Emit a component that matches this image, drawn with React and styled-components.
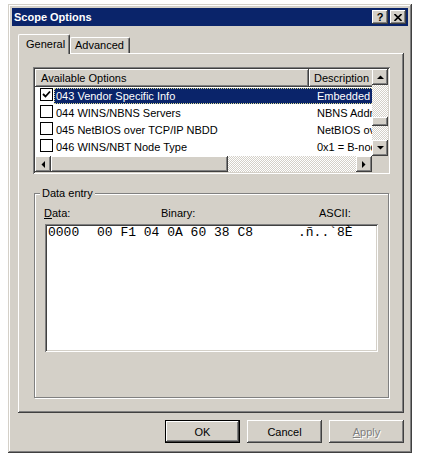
import React from 'react';
import styled, { createGlobalStyle, css } from 'styled-components';

const GlobalStyle = createGlobalStyle`
  body {
    margin: 0;
    background: #ffffff;
    font-family: 'Liberation Sans', Arial, sans-serif;
    font-size: 11px;
    color: #000000;
  }
`;

const raised = css`
  box-shadow: inset -1px -1px #404040, inset 1px 1px #ffffff,
    inset -2px -2px #808080, inset 2px 2px #d4d0c8;
`;

const sunken = css`
  box-shadow: inset 1px 1px #808080, inset -1px -1px #ffffff,
    inset 2px 2px #404040, inset -2px -2px #d4d0c8;
`;

const dither = css`
  background-color: #d4d0c8;
  background-image: conic-gradient(#ffffff 25%, #d4d0c8 0 50%, #ffffff 0 75%, #d4d0c8 0);
  background-size: 2px 2px;
`;

const Window = styled.div`
  box-sizing: border-box;
  margin: 4px 0 0 8px;
  width: 404px;
  height: 449px;
  padding: 4px;
  background: #d4d0c8;
  box-shadow: inset -1px -1px #404040, inset 1px 1px #d4d0c8,
    inset -2px -2px #808080, inset 2px 2px #ffffff;
  display: flex;
  flex-direction: column;
`;

const TitleBar = styled.div`
  height: 18px;
  background: #0a246a;
  display: flex;
  align-items: center;
  justify-content: space-between;
  padding: 0 2px;
`;

const Title = styled.span`
  color: #ffffff;
  font-weight: bold;
  font-size: 11px;
  line-height: 18px;
`;

const CaptionButtons = styled.div`
  display: flex;
  gap: 2px;
`;

const CaptionButton = styled.div`
  width: 16px;
  height: 14px;
  background: #d4d0c8;
  ${raised};
  display: flex;
  align-items: center;
  justify-content: center;
  font-weight: bold;
  font-size: 11px;
  line-height: 14px;
`;

const Body = styled.div`
  flex: 1;
  display: flex;
  flex-direction: column;
  padding: 8px 4px 6px 6px;
`;

const Tabs = styled.div`
  display: flex;
  align-items: flex-end;
  height: 19px;
  position: relative;
  z-index: 1;
`;

const Tab = styled.div`
  box-sizing: border-box;
  width: ${(p) => p.$width}px;
  height: ${(p) => (p.$active ? 20 : 16)}px;
  margin-bottom: ${(p) => (p.$active ? -1 : 0)}px;
  padding-top: ${(p) => (p.$active ? 3 : 1)}px;
  padding-left: ${(p) => (p.$active ? 7 : 4)}px;
  background: #d4d0c8;
  border-top: 1px solid #ffffff;
  border-left: 1px solid #ffffff;
  border-right: 1px solid #404040;
  border-radius: 2px 2px 0 0;
  box-shadow: inset -1px 0 #808080;
  line-height: 13px;
  font-size: 11px;
  white-space: nowrap;
`;

const TabPanel = styled.div`
  box-sizing: border-box;
  height: 360px;
  padding: 14px 14px 0 15px;
  background: #d4d0c8;
  box-shadow: inset -1px -1px #404040, inset 1px 1px #ffffff,
    inset -2px -2px #808080;
`;

const ListView = styled.div`
  box-sizing: border-box;
  width: 357px;
  height: 107px;
  padding: 2px;
  background: #ffffff;
  ${sunken};
`;

const ListGrid = styled.div`
  display: grid;
  grid-template-columns: 337px 16px;
  grid-template-rows: 87px 16px;
  height: 100%;
`;

const ListArea = styled.div`
  overflow: hidden;
  background: #ffffff;
`;

const HeaderRow = styled.div`
  display: flex;
  height: 18px;
`;

const HeaderCell = styled.div`
  box-sizing: border-box;
  flex: 0 0 ${(p) => p.$width}px;
  height: 18px;
  padding-left: ${(p) => p.$pad}px;
  background: #d4d0c8;
  ${raised};
  line-height: 18px;
  font-size: 11px;
  white-space: nowrap;
  overflow: hidden;
`;

const Row = styled.div`
  display: flex;
  align-items: center;
  height: 17px;
  white-space: nowrap;
`;

const CheckCell = styled.div`
  flex: 0 0 19px;
  display: flex;
  align-items: center;
  padding-left: 5px;
  box-sizing: border-box;
`;

const CheckBox = styled.div`
  box-sizing: border-box;
  width: 13px;
  height: 13px;
  border: 1px solid #000000;
  background: #ffffff;
  display: flex;
  align-items: center;
  justify-content: center;
  margin-top: -2px;
`;

const Selection = styled.div`
  box-sizing: border-box;
  flex: 1;
  display: flex;
  height: 16px;
  align-items: center;
  background: ${(p) => (p.$selected ? '#0a246a' : 'transparent')};
  color: ${(p) => (p.$selected ? '#ffffff' : '#000000')};
  outline: ${(p) => (p.$selected ? '1px dotted #d8d890' : 'none')};
  outline-offset: -1px;
`;

const NameCell = styled.div`
  flex: 0 0 255px;
  padding-left: 2px;
  font-size: 11px;
  overflow: hidden;
`;

const DescCell = styled.div`
  flex: 1;
  padding-left: 6px;
  font-size: 11px;
  overflow: hidden;
`;

const VScroll = styled.div`
  display: flex;
  flex-direction: column;
  ${dither};
`;

const HScroll = styled.div`
  display: flex;
  ${dither};
`;

const ScrollButton = styled.div`
  flex: 0 0 16px;
  width: 16px;
  height: 16px;
  background: #d4d0c8;
  ${raised};
  display: flex;
  align-items: center;
  justify-content: center;
`;

const VTrack = styled.div`
  flex: 1;
  padding-top: 32px;
`;

const VThumb = styled.div`
  height: 9px;
  background: #d4d0c8;
  ${raised};
`;

const HThumb = styled.div`
  flex: 0 0 177px;
  background: #d4d0c8;
  ${raised};
`;

const HTrack = styled.div`
  flex: 1;
`;

const Corner = styled.div`
  background: #d4d0c8;
`;

const GroupBox = styled.fieldset`
  box-sizing: border-box;
  width: 355px;
  height: 211px;
  margin: 13px 0 0 1px;
  padding: 0;
  border: 1px solid #808080;
  box-shadow: inset 1px 1px #ffffff, 1px 1px #ffffff;
`;

const Legend = styled.legend`
  margin-left: 5px;
  padding: 0 2px;
  line-height: 13px;
  font-size: 11px;
  background: #d4d0c8;
`;

const FieldLabels = styled.div`
  display: grid;
  grid-template-columns: 117px 158px auto;
  margin: 7px 0 0 9px;
  line-height: 13px;
  font-size: 11px;
`;

const HexEdit = styled.div`
  box-sizing: border-box;
  width: 333px;
  height: 128px;
  margin: 4px 0 0 10px;
  padding: 2px 3px;
  background: #ffffff;
  ${sunken};
`;

const HexLine = styled.div`
  display: grid;
  grid-template-columns: 49px 201px auto;
  font-family: 'Liberation Mono', 'Courier New', monospace;
  font-size: 13px;
  line-height: 14px;
  white-space: pre;
`;

const ButtonRow = styled.div`
  display: flex;
  justify-content: flex-end;
  gap: 7px;
  margin-top: 7px;
`;

const Button = styled.div`
  box-sizing: border-box;
  width: 75px;
  height: 23px;
  background: #d4d0c8;
  display: flex;
  align-items: center;
  justify-content: center;
  font-size: 11px;
  ${(p) =>
    p.$default
      ? css`
          border: 1px solid #000000;
          ${raised};
        `
      : raised};
  color: ${(p) => (p.$disabled ? '#808080' : '#000000')};
  text-shadow: ${(p) => (p.$disabled ? '1px 1px #ffffff' : 'none')};
`;

const Mnemonic = styled.span`
  text-decoration: underline;
`;

const Arrow = ({ dir }) => {
  const pts = {
    up: '0,4 7,4 3.5,0.5',
    down: '0,0 7,0 3.5,3.5',
    left: '4,0 4,7 0.5,3.5',
    right: '0,0 0,7 3.5,3.5',
  }[dir];
  const vertical = dir === 'up' || dir === 'down';
  return (
    <svg width={vertical ? 7 : 4} height={vertical ? 4 : 7} viewBox={vertical ? '0 0 7 4' : '0 0 4 7'}>
      <polygon points={pts} fill="#000" />
    </svg>
  );
};

const Check = () => (
  <svg width="9" height="9" viewBox="0 0 9 9">
    <path d="M1 4 L3.5 6.5 L8 1.5" stroke="#000" strokeWidth="1.8" fill="none" />
  </svg>
);

const options = [
  { name: '043 Vendor Specific Info', desc: 'Embedded vendor-specific options', checked: true, selected: true },
  { name: '044 WINS/NBNS Servers', desc: 'NBNS Addresses in priority order' },
  { name: '045 NetBIOS over TCP/IP NBDD', desc: 'NetBIOS over TCP/IP NBDD address(es)' },
  { name: '046 WINS/NBT Node Type', desc: '0x1 = B-node, 0x2 = P-node, 0x4 = M-node' },
  { name: '047 NetBIOS Scope ID', desc: 'NetBIOS over TCP/IP Scope ID' },
];

export default function App() {
  return (
    <>
      <GlobalStyle />
      <Window>
        <TitleBar>
          <Title>Scope Options</Title>
          <CaptionButtons>
            <CaptionButton>?</CaptionButton>
            <CaptionButton>
              <svg width="8" height="7" viewBox="0 0 8 7">
                <path d="M0.5 0 L7.5 7 M7.5 0 L0.5 7" stroke="#000" strokeWidth="1.6" />
              </svg>
            </CaptionButton>
          </CaptionButtons>
        </TitleBar>
        <Body>
          <Tabs>
            <Tab $active $width={52}>General</Tab>
            <Tab $width={60}>Advanced</Tab>
          </Tabs>
          <TabPanel>
            <ListView>
              <ListGrid>
                <ListArea>
                  <HeaderRow>
                    <HeaderCell $width={274} $pad={6}>Available Options</HeaderCell>
                    <HeaderCell $width={80} $pad={5}>Description</HeaderCell>
                  </HeaderRow>
                  {options.map((o) => (
                    <Row key={o.name}>
                      <CheckCell>
                        <CheckBox>{o.checked && <Check />}</CheckBox>
                      </CheckCell>
                      <Selection $selected={o.selected}>
                        <NameCell>{o.name}</NameCell>
                        <DescCell>{o.desc}</DescCell>
                      </Selection>
                    </Row>
                  ))}
                </ListArea>
                <VScroll>
                  <ScrollButton><Arrow dir="up" /></ScrollButton>
                  <VTrack>
                    <VThumb />
                  </VTrack>
                  <ScrollButton><Arrow dir="down" /></ScrollButton>
                </VScroll>
                <HScroll>
                  <ScrollButton><Arrow dir="left" /></ScrollButton>
                  <HThumb />
                  <HTrack />
                  <ScrollButton><Arrow dir="right" /></ScrollButton>
                </HScroll>
                <Corner />
              </ListGrid>
            </ListView>
            <GroupBox>
              <Legend>Data entry</Legend>
              <FieldLabels>
                <span><Mnemonic>D</Mnemonic>ata:</span>
                <span>Binary:</span>
                <span>ASCII:</span>
              </FieldLabels>
              <HexEdit>
                <HexLine>
                  <span>0000</span>
                  <span>00 F1 04 0A 60 38 C8</span>
                  <span>.ñ..`8È</span>
                </HexLine>
              </HexEdit>
            </GroupBox>
          </TabPanel>
          <ButtonRow>
            <Button $default>OK</Button>
            <Button>Cancel</Button>
            <Button $disabled><span><Mnemonic>A</Mnemonic>pply</span></Button>
          </ButtonRow>
        </Body>
      </Window>
    </>
  );
}
